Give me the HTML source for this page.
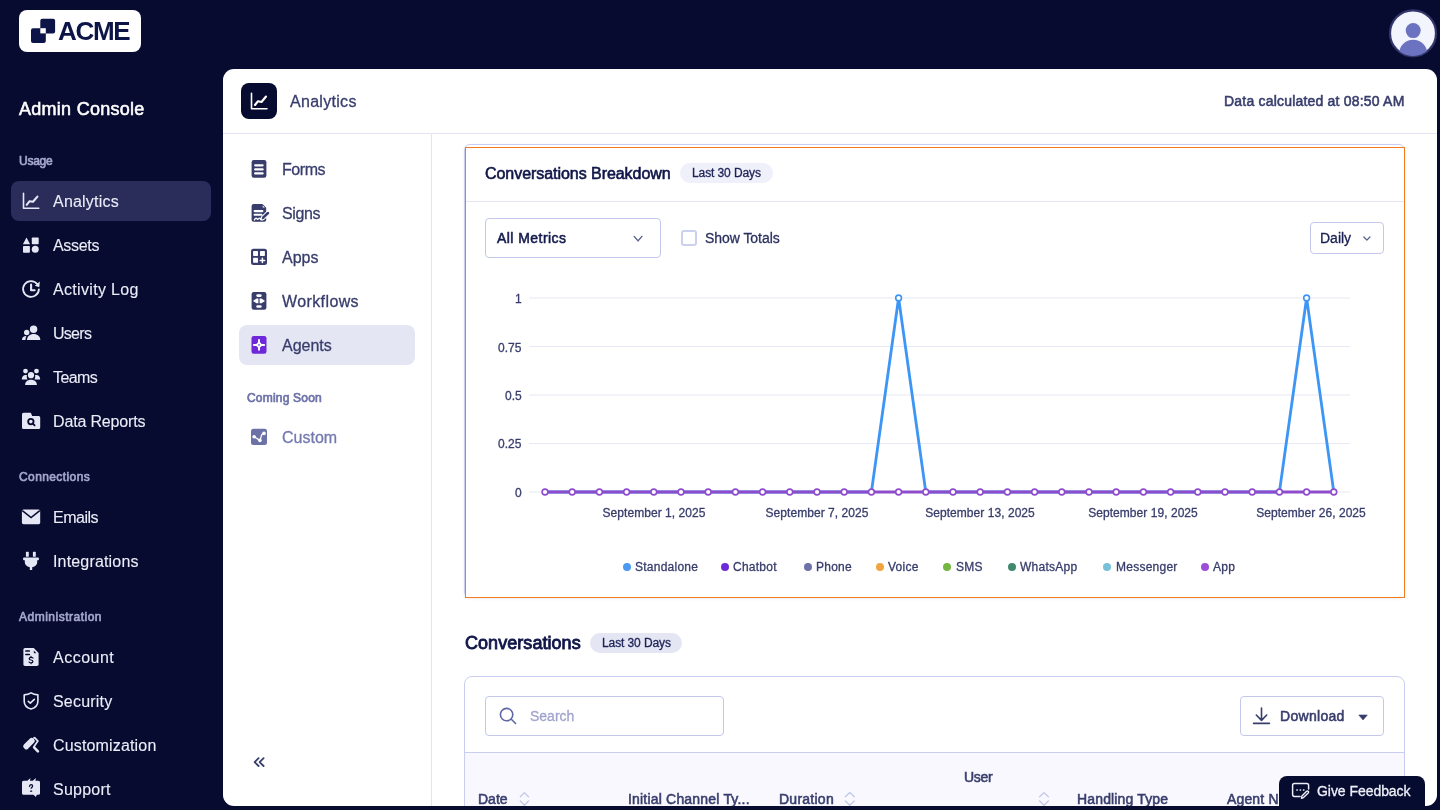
<!DOCTYPE html>
<html><head><meta charset="utf-8">
<style>
*{box-sizing:border-box;margin:0;padding:0}
html,body{width:1440px;height:810px;overflow:hidden;background:#070b30;font-family:"Liberation Sans",sans-serif;-webkit-font-smoothing:antialiased}
.a{position:absolute;white-space:nowrap;will-change:transform}
.logo{left:19px;top:10px;width:122px;height:42px;background:#fff;border-radius:8px}
.admin{left:19px;top:97px;color:#fff;font-size:18px;line-height:24px;letter-spacing:0.27px;-webkit-text-stroke:0.55px #fff}
.sec{left:19px;color:#a4a7cc;font-size:12px;line-height:16px;-webkit-text-stroke:0.65px #a4a7cc}
.nav{left:11px;width:200px;height:40px;border-radius:8px}
.nav.on{background:#2a2d5a}
.nt{left:53px;color:#ecedf8;font-size:16px;line-height:18px}
.ic{position:absolute}
[style*="font-weight:normal"]{-webkit-text-stroke:0.3px currentColor}
.nt{-webkit-text-stroke:0.1px currentColor}
.panel{left:223px;top:69px;width:1214px;height:737px;background:#fff;border-radius:11px;overflow:hidden}
</style></head><body>
<!-- sidebar -->
<div class="a logo"></div>
<div class="a admin">Admin Console</div>
<div class="a sec" style="top:153px;letter-spacing:-0.25px">Usage</div>
<div class="a nav on" style="top:181px"></div>
<div class="a nt" style="top:193px;letter-spacing:0.21px">Analytics</div>
<div class="a nt" style="top:237px;letter-spacing:-0.32px">Assets</div>
<div class="a nt" style="top:281px;letter-spacing:0.32px">Activity Log</div>
<div class="a nt" style="top:325px;letter-spacing:-0.72px">Users</div>
<div class="a nt" style="top:369px;letter-spacing:-0.62px">Teams</div>
<div class="a nt" style="top:413px;letter-spacing:-0.16px">Data Reports</div>
<div class="a sec" style="top:469px;letter-spacing:0.4px">Connections</div>
<div class="a nt" style="top:509px;letter-spacing:-0.5px">Emails</div>
<div class="a nt" style="top:553px;letter-spacing:0.17px">Integrations</div>
<div class="a sec" style="top:609px;letter-spacing:0.5px">Administration</div>
<div class="a nt" style="top:649px;letter-spacing:0.5px">Account</div>
<div class="a nt" style="top:693px;letter-spacing:0.19px">Security</div>
<div class="a nt" style="top:737px;letter-spacing:0.16px">Customization</div>
<div class="a nt" style="top:781px;letter-spacing:0.25px">Support</div>
<svg class="a" style="left:0;top:0" width="223" height="810" viewBox="0 0 223 810" fill="#e6e7f5">
<!-- analytics -->
<g fill="none" stroke="#e6e7f5" stroke-linecap="round" stroke-linejoin="round">
<path d="M23.5 193.2V208.3H38.8" stroke-width="1.6"/>
<path d="M26.7 204.8L29.6 201.2L33 201.8L37.4 196.6" stroke-width="2.1"/>
</g>
<!-- assets -->
<path d="M26.5 237.4L30.1 244.2H22.9Z"/>
<rect x="31.8" y="237.4" width="6.9" height="6.8" rx="0.8"/>
<rect x="23" y="245.9" width="6.9" height="6.8" rx="0.8"/>
<circle cx="35.25" cy="249.3" r="3.5"/>
<!-- activity log -->
<g fill="none" stroke="#e6e7f5" stroke-width="1.8" stroke-linecap="round" stroke-linejoin="round">
<path d="M38.9 289.4A7.9 7.9 0 1 1 37.4 284.3"/>
<path d="M31.1 284.6V290.3H34.6" stroke-width="2.1"/>
</g>
<path d="M39.8 281.6L39.3 287.2L34.8 285.8Z"/>
<!-- users -->
<circle cx="33.6" cy="329.2" r="3.7"/>
<path d="M27 340.1C27 336.2 29.8 333.9 33.7 333.9C37.5 333.9 40.3 336.2 40.3 340.1Z"/>
<circle cx="26.7" cy="332.5" r="2.7"/>
<path d="M22 340.1C22 338 23.2 336.2 25.5 336L26.3 336.1C25.7 337.3 25.5 338.7 25.5 340.1Z"/>
<!-- teams -->
<circle cx="25.5" cy="371.1" r="2.4"/>
<circle cx="36.5" cy="371.1" r="2.4"/>
<circle cx="31" cy="375.2" r="3.1"/>
<path d="M21.8 379.5C21.8 376.8 23.3 374.9 25.6 374.9C26.2 374.9 26.7 375 27 375.2C26.5 376.5 26.8 378.3 27.5 379.5Z"/>
<path d="M40.2 379.5C40.2 376.8 38.7 374.9 36.4 374.9C35.8 374.9 35.3 375 35 375.2C35.5 376.5 35.2 378.3 34.5 379.5Z"/>
<path d="M25.1 385.1C25.1 381.9 27.4 379.8 31 379.8C34.6 379.8 36.9 381.9 36.9 385.1Z"/>
<!-- data reports -->
<path d="M23.5 412.7H30.8L32.2 415.9H38.7Q40.2 415.9 40.2 417.4V427.4Q40.2 428.9 38.7 428.9H23.5Q22 428.9 22 427.4V414.2Q22 412.7 23.5 412.7Z"/>
<g fill="none" stroke="#070b30" stroke-width="1.8" stroke-linecap="round"><circle cx="30.85" cy="421.6" r="2.7"/><path d="M32.9 423.7L34.6 425.4"/></g>
<!-- emails -->
<rect x="21.9" y="509.4" width="18.3" height="14.8" rx="1.6"/>
<path d="M22.3 510.6L31.05 517.6L39.8 510.6" fill="none" stroke="#070b30" stroke-width="1.5"/>
<!-- integrations -->
<rect x="25.9" y="551.8" width="2.9" height="5" rx="0.6"/>
<rect x="32.9" y="551.8" width="2.9" height="5" rx="0.6"/>
<rect x="23.1" y="557.6" width="15.8" height="2.6" rx="0.8"/>
<path d="M24.8 560H37.2V562.3Q37.2 566 32.2 567.2V570H29.8V567.2Q24.8 566 24.8 562.3Z"/>
<!-- account -->
<path d="M25 647.9H33.8L38.6 652.9V664.3Q38.6 665.9 37 665.9H25Q23.4 665.9 23.4 664.3V649.5Q23.4 647.9 25 647.9Z"/>
<path d="M33.8 650.5L36.3 653.2H34.4Q33.8 653.2 33.8 652.6Z" fill="#070b30"/>
<g fill="none" stroke="#070b30" stroke-linecap="round">
<path d="M25.8 651.1H29.4M25.8 654.4H29.4" stroke-width="1.5"/>
<path d="M33 658Q32.5 657.3 31 657.3Q29.2 657.3 29.2 658.7Q29.2 659.8 31 660Q32.9 660.2 32.9 661.5Q32.9 662.8 31 662.8Q29.5 662.8 29 662M31 656.3V657.3M31 662.8V663.7" stroke-width="1.25"/>
</g>
<!-- security -->
<g fill="none" stroke="#e6e7f5" stroke-linecap="round" stroke-linejoin="round">
<path d="M31.05 692.9C29 694.2 26.7 694.8 24.2 694.9V701.2C24.2 705.2 27 707.8 31.05 709C35.1 707.8 37.9 705.2 37.9 701.2V694.9C35.4 694.8 33.1 694.2 31.05 692.9Z" stroke-width="1.6"/>
<path d="M28.3 701.3L30.3 703.1L34.3 699.3" stroke-width="1.6"/>
</g>
<!-- customization -->
<path d="M23.9 747.9A2.3 2.3 0 0 1 23.9 744.6L30 738.5A2.3 2.3 0 0 1 33.3 738.5L34.1 739.3A2.3 2.3 0 0 1 34.1 742.6L28 748.7A2.3 2.3 0 0 1 24.7 748.7Z"/>
<g fill="none" stroke="#e6e7f5" stroke-linecap="round" stroke-linejoin="round">
<path d="M33.9 738.1L34.6 737.7L37.9 741.1L34.1 746.6" stroke-width="1.7"/>
<path d="M34.1 747.4L37.9 751.3" stroke-width="2.6"/>
</g>
<!-- support -->
<path d="M23.5 780.8H27.3L30.5 777.9L29.9 780.8H32.8L36 777.9L35.4 780.8H38.5Q40 780.8 40 782.3V793.2Q40 794.7 38.5 794.7H36.8L35.9 796.9L33.5 794.7H23.5Q22 794.7 22 793.2V782.3Q22 780.8 23.5 780.8Z"/>
<g fill="none" stroke="#070b30" stroke-linecap="round" stroke-width="1.3">
<path d="M29.5 786.3Q30 784.6 31.2 784.6Q32.6 784.6 32.6 786Q32.6 787.1 31.2 788.1"/>
<path d="M30.6 791.2H31.6"/>
</g>
</svg>

<div class="a panel"></div>
<!--PANEL-->
<div class="a" style="left:241px;top:83px;width:36px;height:36px;background:#070b30;border-radius:8px"></div>
<div class="a" style="left:289.5px;top:94.00px;font-size:16px;line-height:16px;color:#383d6c;font-weight:normal;letter-spacing:0.3px;">Analytics</div>
<div class="a" style="right:35.0px;top:94.00px;font-size:14px;line-height:14px;color:#383d6c;font-weight:normal;letter-spacing:0.2px;-webkit-text-stroke:0.55px #383d6c">Data calculated at 08:50 AM</div>
<div class="a" style="left:223px;top:133px;width:1214px;height:1px;background:#e3e5f5"></div>
<div class="a" style="left:431px;top:134px;width:1px;height:672px;background:#e3e5f5"></div>
<div class="a" style="left:239px;top:325px;width:176px;height:40px;background:#e4e6f4;border-radius:8px"></div>
<div class="a" style="left:281.6px;top:162.00px;font-size:16px;line-height:16px;color:#383d6c;font-weight:normal;letter-spacing:-0.45px;">Forms</div>
<div class="a" style="left:281.6px;top:206.00px;font-size:16px;line-height:16px;color:#383d6c;font-weight:normal;letter-spacing:-0.4px;">Signs</div>
<div class="a" style="left:281.6px;top:250.00px;font-size:16px;line-height:16px;color:#383d6c;font-weight:normal;letter-spacing:0px;">Apps</div>
<div class="a" style="left:281.6px;top:294.00px;font-size:16px;line-height:16px;color:#383d6c;font-weight:normal;letter-spacing:0.39px;">Workflows</div>
<div class="a" style="left:281.6px;top:338.00px;font-size:16px;line-height:16px;color:#383d6c;font-weight:normal;letter-spacing:0px;">Agents</div>
<div class="a" style="left:247.2px;top:392.00px;font-size:12px;line-height:12px;color:#6e73a8;font-weight:normal;letter-spacing:0.2px;-webkit-text-stroke:0.7px #6e73a8">Coming Soon</div>
<div class="a" style="left:281.6px;top:430.00px;font-size:16px;line-height:16px;color:#7479b0;font-weight:normal;letter-spacing:0px;">Custom</div>
<div class="a" style="left:464px;top:144px;width:941px;height:454px;border:1px solid #c9cdf0;border-radius:6px;box-shadow:0 1px 3px rgba(40,40,90,0.08)"></div>
<div class="a" style="left:465px;top:147px;width:940px;height:451px;border:1px solid #f47c20;background:#fff"></div>
<div class="a" style="left:485.3px;top:166.00px;font-size:16px;line-height:16px;color:#0f1548;font-weight:normal;letter-spacing:-0.05px;-webkit-text-stroke:0.6px #0f1548">Conversations Breakdown</div>
<div class="a" style="left:680px;top:163px;width:93px;height:20px;background:#eff0fa;border-radius:10px"></div>
<div class="a" style="left:692.4px;top:167.00px;font-size:12px;line-height:12px;color:#1c2254;font-weight:normal;letter-spacing:-0.1px;">Last 30 Days</div>
<div class="a" style="left:466px;top:201px;width:938px;height:1px;background:#e3e5f5"></div>
<div class="a" style="left:485px;top:218px;width:176px;height:40px;border:1px solid #c3c7ea;border-radius:4px"></div>
<div class="a" style="left:497.2px;top:231.00px;font-size:14px;line-height:14px;color:#141a4e;font-weight:normal;letter-spacing:0.45px;-webkit-text-stroke:0.55px #141a4e">All Metrics</div>
<div class="a" style="left:681px;top:230px;width:16px;height:16px;border:2px solid #ccd0ef;border-radius:3px"></div>
<div class="a" style="left:705.3px;top:231.00px;font-size:14px;line-height:14px;color:#2c3160;font-weight:normal;letter-spacing:-0.05px;">Show Totals</div>
<div class="a" style="left:1310px;top:222px;width:74px;height:32px;border:1px solid #c3c7ea;border-radius:4px"></div>
<div class="a" style="left:1319.6px;top:231.00px;font-size:14px;line-height:14px;color:#1a2052;font-weight:normal;letter-spacing:0px;">Daily</div>
<div class="a" style="right:918.2px;top:293.00px;font-size:12px;line-height:12px;color:#383d6c;font-weight:normal;letter-spacing:0px;">1</div>
<div class="a" style="right:918.2px;top:342.00px;font-size:12px;line-height:12px;color:#383d6c;font-weight:normal;letter-spacing:0px;">0.75</div>
<div class="a" style="right:918.2px;top:390.00px;font-size:12px;line-height:12px;color:#383d6c;font-weight:normal;letter-spacing:0px;">0.5</div>
<div class="a" style="right:918.2px;top:438.00px;font-size:12px;line-height:12px;color:#383d6c;font-weight:normal;letter-spacing:0px;">0.25</div>
<div class="a" style="right:918.2px;top:487.00px;font-size:12px;line-height:12px;color:#383d6c;font-weight:normal;letter-spacing:0px;">0</div>
<div class="a" style="left:353.7px;width:600px;text-align:center;top:507.00px;font-size:12px;line-height:12px;color:#383d6c;font-weight:normal;letter-spacing:0.05px;">September 1, 2025</div>
<div class="a" style="left:517.0px;width:600px;text-align:center;top:507.00px;font-size:12px;line-height:12px;color:#383d6c;font-weight:normal;letter-spacing:0.05px;">September 7, 2025</div>
<div class="a" style="left:680.2px;width:600px;text-align:center;top:507.00px;font-size:12px;line-height:12px;color:#383d6c;font-weight:normal;letter-spacing:0.05px;">September 13, 2025</div>
<div class="a" style="left:843.4px;width:600px;text-align:center;top:507.00px;font-size:12px;line-height:12px;color:#383d6c;font-weight:normal;letter-spacing:0.05px;">September 19, 2025</div>
<div class="a" style="left:1010.5px;width:600px;text-align:center;top:507.00px;font-size:12px;line-height:12px;color:#383d6c;font-weight:normal;letter-spacing:0.05px;">September 26, 2025</div>
<div class="a" style="left:622.8px;top:563px;width:8px;height:8px;border-radius:4px;background:#4a9af0"></div>
<div class="a" style="left:635.1px;top:561.00px;font-size:12px;line-height:12px;color:#383d6c;font-weight:normal;letter-spacing:0.25px;">Standalone</div>
<div class="a" style="left:721.1px;top:563px;width:8px;height:8px;border-radius:4px;background:#6c2bd9"></div>
<div class="a" style="left:733.4px;top:561.00px;font-size:12px;line-height:12px;color:#383d6c;font-weight:normal;letter-spacing:0.25px;">Chatbot</div>
<div class="a" style="left:803.6px;top:563px;width:8px;height:8px;border-radius:4px;background:#6e72a8"></div>
<div class="a" style="left:815.9px;top:561.00px;font-size:12px;line-height:12px;color:#383d6c;font-weight:normal;letter-spacing:0.25px;">Phone</div>
<div class="a" style="left:875.6px;top:563px;width:8px;height:8px;border-radius:4px;background:#f0a640"></div>
<div class="a" style="left:887.9px;top:561.00px;font-size:12px;line-height:12px;color:#383d6c;font-weight:normal;letter-spacing:0.25px;">Voice</div>
<div class="a" style="left:943.4px;top:563px;width:8px;height:8px;border-radius:4px;background:#74b641"></div>
<div class="a" style="left:955.7px;top:561.00px;font-size:12px;line-height:12px;color:#383d6c;font-weight:normal;letter-spacing:0.25px;">SMS</div>
<div class="a" style="left:1007.5px;top:563px;width:8px;height:8px;border-radius:4px;background:#3d8a6e"></div>
<div class="a" style="left:1019.8px;top:561.00px;font-size:12px;line-height:12px;color:#383d6c;font-weight:normal;letter-spacing:0.25px;">WhatsApp</div>
<div class="a" style="left:1103.3px;top:563px;width:8px;height:8px;border-radius:4px;background:#78c0da"></div>
<div class="a" style="left:1115.6px;top:561.00px;font-size:12px;line-height:12px;color:#383d6c;font-weight:normal;letter-spacing:0.25px;">Messenger</div>
<div class="a" style="left:1201.0px;top:563px;width:8px;height:8px;border-radius:4px;background:#9b4fd6"></div>
<div class="a" style="left:1213.3px;top:561.00px;font-size:12px;line-height:12px;color:#383d6c;font-weight:normal;letter-spacing:0.25px;">App</div>
<svg class="a" style="left:0;top:0" width="1440" height="810" viewBox="0 0 1440 810"><rect x="529" y="297.5" width="821" height="1" fill="#e8e9f6"/><rect x="529" y="346.0" width="821" height="1" fill="#e8e9f6"/><rect x="529" y="394.5" width="821" height="1" fill="#e8e9f6"/><rect x="529" y="443.0" width="821" height="1" fill="#e8e9f6"/><rect x="529" y="491.5" width="821" height="1" fill="#e8e9f6"/><polyline points="545.0,492 572.2,492 599.4,492 626.6,492 653.8,492 681.0,492 708.2,492 735.4,492 762.6,492 789.8,492 817.0,492 844.2,492 871.4,492 898.6,298 925.8,492 953.0,492 980.2,492 1007.4,492 1034.6,492 1061.8,492 1089.0,492 1116.2,492 1143.4,492 1170.6,492 1197.8,492 1225.0,492 1252.2,492 1279.4,492 1306.6,298 1333.8,492" fill="none" stroke="#3d95f5" stroke-width="2.8" stroke-linejoin="miter"/><line x1="545.0" y1="492" x2="1333.8" y2="492" stroke="#8e4ccc" stroke-width="3"/><circle cx="545.0" cy="492" r="2.9" fill="#fff" stroke="#8e4ccc" stroke-width="1.6"/><circle cx="572.2" cy="492" r="2.9" fill="#fff" stroke="#8e4ccc" stroke-width="1.6"/><circle cx="599.4" cy="492" r="2.9" fill="#fff" stroke="#8e4ccc" stroke-width="1.6"/><circle cx="626.6" cy="492" r="2.9" fill="#fff" stroke="#8e4ccc" stroke-width="1.6"/><circle cx="653.8" cy="492" r="2.9" fill="#fff" stroke="#8e4ccc" stroke-width="1.6"/><circle cx="681.0" cy="492" r="2.9" fill="#fff" stroke="#8e4ccc" stroke-width="1.6"/><circle cx="708.2" cy="492" r="2.9" fill="#fff" stroke="#8e4ccc" stroke-width="1.6"/><circle cx="735.4" cy="492" r="2.9" fill="#fff" stroke="#8e4ccc" stroke-width="1.6"/><circle cx="762.6" cy="492" r="2.9" fill="#fff" stroke="#8e4ccc" stroke-width="1.6"/><circle cx="789.8" cy="492" r="2.9" fill="#fff" stroke="#8e4ccc" stroke-width="1.6"/><circle cx="817.0" cy="492" r="2.9" fill="#fff" stroke="#8e4ccc" stroke-width="1.6"/><circle cx="844.2" cy="492" r="2.9" fill="#fff" stroke="#8e4ccc" stroke-width="1.6"/><circle cx="871.4" cy="492" r="2.9" fill="#fff" stroke="#8e4ccc" stroke-width="1.6"/><circle cx="898.6" cy="492" r="2.9" fill="#fff" stroke="#8e4ccc" stroke-width="1.6"/><circle cx="925.8" cy="492" r="2.9" fill="#fff" stroke="#8e4ccc" stroke-width="1.6"/><circle cx="953.0" cy="492" r="2.9" fill="#fff" stroke="#8e4ccc" stroke-width="1.6"/><circle cx="980.2" cy="492" r="2.9" fill="#fff" stroke="#8e4ccc" stroke-width="1.6"/><circle cx="1007.4" cy="492" r="2.9" fill="#fff" stroke="#8e4ccc" stroke-width="1.6"/><circle cx="1034.6" cy="492" r="2.9" fill="#fff" stroke="#8e4ccc" stroke-width="1.6"/><circle cx="1061.8" cy="492" r="2.9" fill="#fff" stroke="#8e4ccc" stroke-width="1.6"/><circle cx="1089.0" cy="492" r="2.9" fill="#fff" stroke="#8e4ccc" stroke-width="1.6"/><circle cx="1116.2" cy="492" r="2.9" fill="#fff" stroke="#8e4ccc" stroke-width="1.6"/><circle cx="1143.4" cy="492" r="2.9" fill="#fff" stroke="#8e4ccc" stroke-width="1.6"/><circle cx="1170.6" cy="492" r="2.9" fill="#fff" stroke="#8e4ccc" stroke-width="1.6"/><circle cx="1197.8" cy="492" r="2.9" fill="#fff" stroke="#8e4ccc" stroke-width="1.6"/><circle cx="1225.0" cy="492" r="2.9" fill="#fff" stroke="#8e4ccc" stroke-width="1.6"/><circle cx="1252.2" cy="492" r="2.9" fill="#fff" stroke="#8e4ccc" stroke-width="1.6"/><circle cx="1279.4" cy="492" r="2.9" fill="#fff" stroke="#8e4ccc" stroke-width="1.6"/><circle cx="1306.6" cy="492" r="2.9" fill="#fff" stroke="#8e4ccc" stroke-width="1.6"/><circle cx="1333.8" cy="492" r="2.9" fill="#fff" stroke="#8e4ccc" stroke-width="1.6"/><circle cx="898.6" cy="298" r="2.9" fill="#fff" stroke="#3d95f5" stroke-width="1.6"/><circle cx="1306.6" cy="298" r="2.9" fill="#fff" stroke="#3d95f5" stroke-width="1.6"/></svg>
<div class="a" style="left:464.6px;top:634.00px;font-size:18px;line-height:18px;color:#0f1548;font-weight:normal;letter-spacing:0.05px;-webkit-text-stroke:0.85px #0f1548">Conversations</div>
<div class="a" style="left:590px;top:633px;width:92px;height:20px;background:#e4e6f4;border-radius:10px"></div>
<div class="a" style="left:602.0px;top:637.00px;font-size:12px;line-height:12px;color:#1c2254;font-weight:normal;letter-spacing:-0.1px;">Last 30 Days</div>
<div class="a" style="left:464px;top:676px;width:941px;height:200px;border:1px solid #c9cdf0;border-radius:8px;overflow:hidden"><div style="position:absolute;left:0;top:75px;width:100%;height:130px;background:#f8f8fe;border-top:1px solid #c9cdf0"></div></div>
<div class="a" style="left:485px;top:696px;width:239px;height:40px;border:1px solid #c3c7ea;border-radius:4px;background:#fff"></div>
<div class="a" style="left:530.4px;top:709.00px;font-size:14px;line-height:14px;color:#a0a4cc;font-weight:normal;letter-spacing:0px;">Search</div>
<div class="a" style="left:1240px;top:696px;width:144px;height:40px;border:1px solid #c3c7ea;border-radius:4px;background:#fff"></div>
<div class="a" style="left:1279.5px;top:709.00px;font-size:14px;line-height:14px;color:#383d6c;font-weight:normal;letter-spacing:0.3px;-webkit-text-stroke:0.55px #383d6c">Download</div>
<div class="a" style="left:478.3px;top:792.00px;font-size:14px;line-height:14px;color:#383d6c;font-weight:normal;letter-spacing:0px;-webkit-text-stroke:0.55px #383d6c">Date</div>
<div class="a" style="left:627.5px;top:792.00px;font-size:14px;line-height:14px;color:#383d6c;font-weight:normal;letter-spacing:0.19px;-webkit-text-stroke:0.55px #383d6c">Initial Channel Ty...</div>
<div class="a" style="left:778.7px;top:792.00px;font-size:14px;line-height:14px;color:#383d6c;font-weight:normal;letter-spacing:0.25px;-webkit-text-stroke:0.55px #383d6c">Duration</div>
<div class="a" style="left:963.7px;top:770.00px;font-size:14px;line-height:14px;color:#383d6c;font-weight:normal;letter-spacing:-0.3px;-webkit-text-stroke:0.55px #383d6c">User</div>
<div class="a" style="left:1077.3px;top:792.00px;font-size:14px;line-height:14px;color:#383d6c;font-weight:normal;letter-spacing:0.15px;-webkit-text-stroke:0.55px #383d6c">Handling Type</div>
<div class="a" style="left:1227.3px;top:792.00px;font-size:14px;line-height:14px;color:#383d6c;font-weight:normal;letter-spacing:0.15px;-webkit-text-stroke:0.55px #383d6c">Agent N</div>
<svg class="a" style="left:1388px;top:8px" width="50" height="50" viewBox="0 0 50 50">
<defs><clipPath id="av"><circle cx="25" cy="25.3" r="22.6"/></clipPath></defs>
<circle cx="25" cy="25.3" r="23" fill="#f2f5fd" stroke="#33366a" stroke-width="2.2"/>
<g clip-path="url(#av)" fill="#6b72c0"><circle cx="25.2" cy="22.6" r="7.5"/><ellipse cx="25.2" cy="45.5" rx="14" ry="13.8"/></g>
</svg>
<div class="a" style="left:57.6px;top:18px;font-size:26px;line-height:26px;font-weight:bold;color:#0d1447;letter-spacing:-1.3px">ACME</div>
<svg class="a" style="left:0;top:0" width="1440" height="810" viewBox="0 0 1440 810">
<!-- logo -->
<path d="M33 28.2H43.8Q45.8 28.2 45.8 30.2V40.9Q45.8 42.9 43.8 42.9H33Q31 42.9 31 40.9V30.2Q31 28.2 33 28.2Z" fill="#0d1447"/>
<path d="M42.3 18.8H53.1Q55.1 18.8 55.1 20.8V31.4Q55.1 33.4 53.1 33.4H42.3Q40.3 33.4 40.3 31.4V20.8Q40.3 18.8 42.3 18.8Z" fill="#0d1447"/>
<rect x="40.3" y="28.2" width="5.5" height="5.2" fill="#fff"/>
<!-- header icon -->
<g fill="none" stroke="#fff" stroke-linecap="round" stroke-linejoin="round">
<path d="M251.5 93.2V108.8H267" stroke-width="1.6"/>
<path d="M255 105L258 101.2L261.5 102L266 96.5" stroke-width="2.1"/>
</g>
<!-- forms -->
<rect x="251.6" y="160" width="14.8" height="17.8" rx="2.2" fill="#383d6c"/>
<g stroke="#fff" stroke-width="2.3" stroke-linecap="round"><path d="M255.2 165.3H262.6M255.2 169.4H262.6M255.2 173.4H262.6"/></g>
<!-- signs -->
<path d="M253.6 204H262.4L266.2 207.8V219.8Q266.2 221.8 264.2 221.8H253.6Q251.6 221.8 251.6 219.8V206Q251.6 204 253.6 204Z" fill="#383d6c"/>
<path d="M262.7 205.4L264.9 207.6H263.3Q262.7 207.6 262.7 207Z" fill="#fff"/>
<g stroke="#fff" stroke-linecap="round" fill="none">
<path d="M254.6 211.1H262.4M254.6 214.8H261.4" stroke-width="2.1"/>
<path d="M254.4 219.9Q255.6 217.6 256.8 218.6Q257.8 219.9 258.9 218.4Q259.9 217.5 260.7 219.4Q261.6 220.3 263.4 219.3" stroke-width="1.4"/>
</g>
<path d="M263.2 217.6L268.1 212.9" stroke="#fff" stroke-width="4.6" stroke-linecap="round"/>
<path d="M263.4 217.4L268 213" stroke="#383d6c" stroke-width="2.5" stroke-linecap="round"/>
<path d="M261.8 219.4L262.6 216.6L264.5 218.4Z" fill="#383d6c"/>
<!-- apps -->
<rect x="251" y="248.8" width="16" height="16.1" rx="2.5" fill="#383d6c"/>
<rect x="253.1" y="250.9" width="4.9" height="5" rx="0.6" fill="#fff"/>
<rect x="260" y="250.9" width="4.9" height="5" rx="0.6" fill="#fff"/>
<rect x="253.1" y="257.8" width="4.9" height="5" rx="0.6" fill="#fff"/>
<path d="M262.4 258.2V262.6M260.2 260.4H264.6" stroke="#fff" stroke-width="1.5" stroke-linecap="round"/>
<!-- workflows -->
<rect x="251.6" y="292" width="14.8" height="17.8" rx="2.2" fill="#383d6c"/>
<g fill="#fff">
<rect x="256.3" y="294.3" width="5.4" height="2.6" rx="1.3"/>
<rect x="256.3" y="305.2" width="5.4" height="2.6" rx="1.3"/>
<path d="M253 300.9L256.5 298.5H261.5L265 300.9L261.5 303.3H256.5Z"/>
</g>
<path d="M259 297.5V304.3" stroke="#383d6c" stroke-width="1.2"/>
<!-- agents -->
<rect x="251.5" y="336" width="15" height="17.8" rx="2.2" fill="#6e28d9"/>
<path d="M259 340V349.8M253.9 344.9H264.1" stroke="#fff" stroke-width="2.0" stroke-linecap="round"/>
<path d="M259 341.2L262.7 344.9L259 348.6L255.3 344.9Z" fill="#fff"/>
<circle cx="259" cy="344.9" r="0.9" fill="#8a55e0"/>
<!-- custom -->
<rect x="251" y="428.8" width="16" height="16.1" rx="2.5" fill="#6c71a8"/>
<g fill="#fff"><circle cx="254.1" cy="436.7" r="1.8"/><circle cx="259.9" cy="440.4" r="1.8"/><circle cx="264" cy="433.4" r="1.8"/></g>
<path d="M254.1 436.7L259.9 440.4C261 438.5 261.2 434.6 262.4 433.9L264 433.4" fill="none" stroke="#fff" stroke-width="1.3"/>
<!-- collapse -->
<path d="M258.6 758.2L254.6 762.1L258.6 766M263.6 758.2L259.6 762.1L263.6 766" fill="none" stroke="#383d6c" stroke-width="1.8" stroke-linecap="round" stroke-linejoin="round"/>
<!-- chevrons -->
<path d="M634.2 236.4L638.05 240.9L641.9 236.4" fill="none" stroke="#5a5f92" stroke-width="1.4" stroke-linecap="round" stroke-linejoin="round"/>
<path d="M1363.9 237L1366.9 240.1L1369.9 237" fill="none" stroke="#5a5f92" stroke-width="1.3" stroke-linecap="round" stroke-linejoin="round"/>
<!-- search -->
<circle cx="506.6" cy="714.6" r="6.2" fill="none" stroke="#5f65a2" stroke-width="1.6"/>
<path d="M511.3 719.3L515.6 723.5" stroke="#5f65a2" stroke-width="1.6" stroke-linecap="round"/>
<!-- download -->
<g fill="none" stroke="#383d6c" stroke-width="1.6" stroke-linecap="round" stroke-linejoin="round">
<path d="M1261.5 708V720.4M1256.3 715L1261.5 720.4L1266.7 715M1253.6 723.4H1269.4"/>
</g>
<path d="M1358.8 715H1367.3L1363.05 719.9Z" fill="#383d6c" stroke="#383d6c" stroke-width="0.6" stroke-linejoin="round"/>
<!-- sort icons -->
<g fill="none" stroke="#c3c7ea" stroke-width="1.3" stroke-linecap="round" stroke-linejoin="round">
<path d="M520.3 796.8L524.4 792.6L528.5 796.8M520.3 801L524.4 805.2L528.5 801"/>
<path d="M845.3 796.8L849.8 792.6L854.3 796.8M845.3 801L849.8 805.2L854.3 801"/>
<path d="M1039.6 796.8L1044 792.6L1048.4 796.8M1039.6 801L1044 805.2L1048.4 801"/>
</g>
</svg>
<div class="a" style="left:223px;top:806px;width:1217px;height:4px;background:#070b30"></div>
<div class="a" style="left:1279px;top:776px;width:146px;height:40px;background:#060b30;border-radius:8px"></div>
<div class="a" style="left:1317.3px;top:784.00px;font-size:14px;line-height:14px;color:#f0f1fa;font-weight:normal;letter-spacing:-0.05px;">Give Feedback</div>
<svg class="a" style="left:1280px;top:776px" width="40" height="30" viewBox="1280 776 40 30">
<path d="M1300 796.4H1294.4Q1292.6 796.4 1292.6 794.6V785.4Q1292.6 783.6 1294.4 783.6H1306.8Q1308.6 783.6 1308.6 785.4V789" fill="none" stroke="#ecedf8" stroke-width="1.5" stroke-linecap="round"/>
<g fill="#ecedf8"><rect x="1296.3" y="789.2" width="1.6" height="1.6" rx="0.4"/><rect x="1299.6" y="789.2" width="1.6" height="1.6" rx="0.4"/><rect x="1302.9" y="789.2" width="1.6" height="1.6" rx="0.4"/></g>
<path d="M1301.5 798.4L1301.9 796L1306.6 791.3Q1307.4 790.5 1308.2 791.3Q1309 792.1 1308.2 792.9L1303.5 797.6Z" fill="#060b30" stroke="#ecedf8" stroke-width="1.4" stroke-linejoin="round"/>
</svg>
<!--END-->
</body></html>
